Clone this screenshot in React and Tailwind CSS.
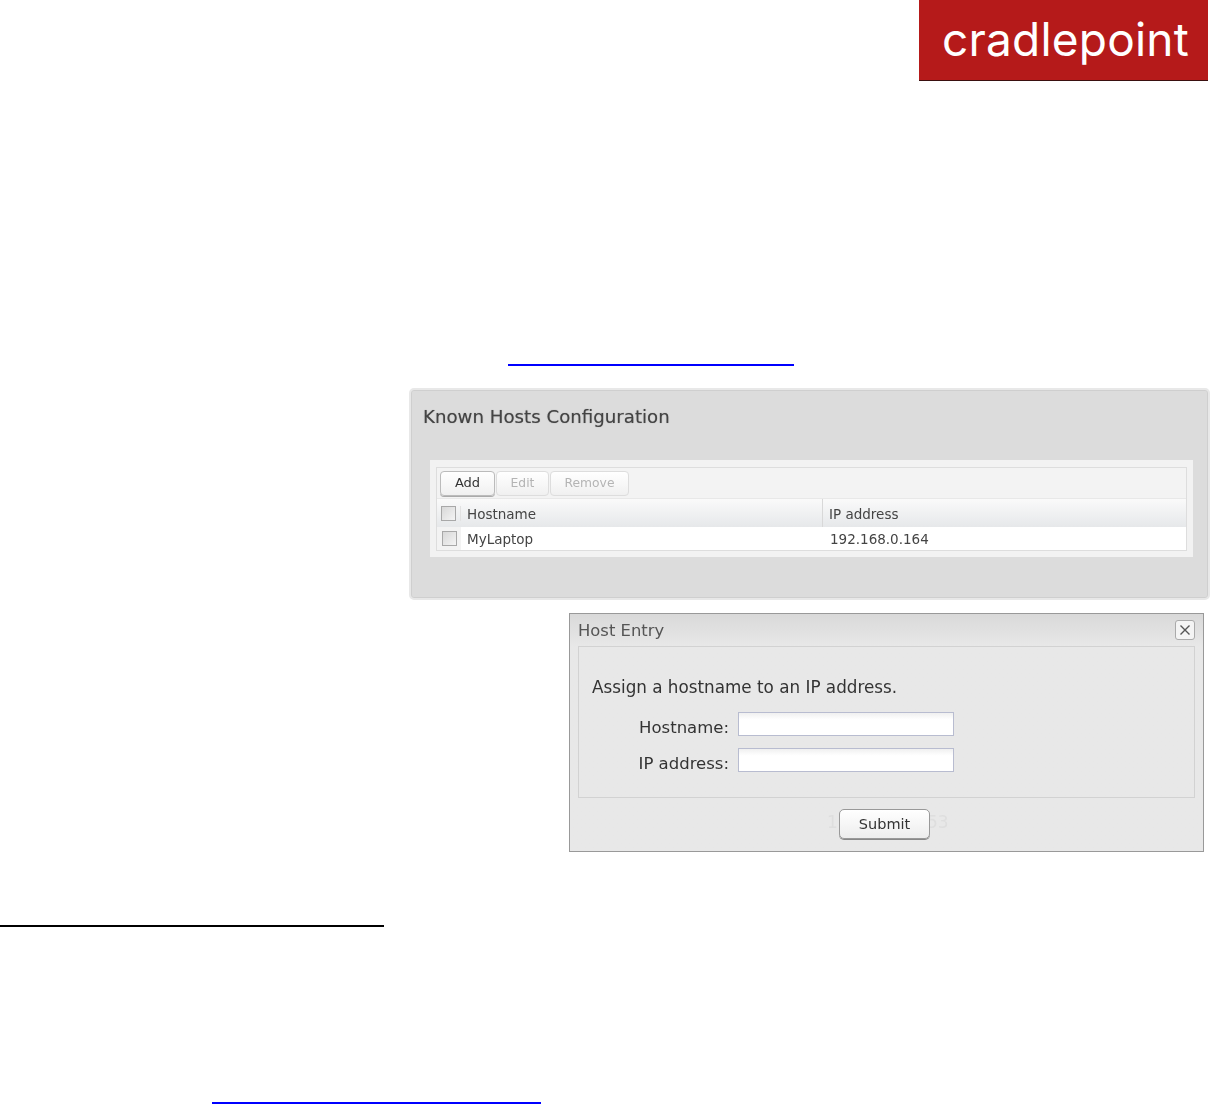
function ToolButton({ label, disabled, className }) {
  return (
    <div
      className={`flex h-[25px] items-center justify-center rounded-[4px] border bg-gradient-to-b from-white to-[#f0f0f0] ${
        disabled ? "border-[#dddddd] text-[12.3px] text-[#b4b4b4]" : "border-[#bbbbbb] text-[13px] text-[#333333] shadow-[0_1px_0_#aaaaaa]"
      } ${className}`}
    >
      {label}
    </div>
  );
}

function CheckBox() {
  return <div className="h-[15px] w-[15px] border border-[#a8a8a8] bg-gradient-to-br from-[#d8d8d8] to-[#f4f4f4]" />;
}

function KnownHosts() {
  return (
    <div className="ml-[409px] mt-[22px] h-[212px] w-[801px] rounded-[5px] border-[3px] border-[#e8e8e8] bg-[#dcdcdc] outline outline-1 -outline-offset-3 outline-[#cfcfcf]">
      <h2 className="ml-[11px] mt-[14px] text-[18.2px] leading-[24px] text-[#444444] [text-shadow:0_0_1px_#888888]">
        Known Hosts Configuration
      </h2>
      <div className="ml-[18px] mt-[31px] h-[97px] w-[763px] bg-[#f2f2f2] px-[6px] pt-[7px]">
        <div className="border border-[#dddddd] bg-white">
          <div className="flex h-[31px] items-center border-b border-[#e8e8e8] bg-[#f3f3f3] pl-[3px]">
            <ToolButton label="Add" className="w-[55px]" />
            <ToolButton label="Edit" disabled className="ml-[1px] w-[53px]" />
            <ToolButton label="Remove" disabled className="ml-[1px] w-[79px]" />
          </div>
          <div className="flex h-[28px] items-center bg-gradient-to-b from-[#fafafa] to-[#e6e8ea] text-[13.5px] text-[#444444]">
            <div className="flex w-[24px] shrink-0 justify-center border-r border-[#e2e2e2]">
              <CheckBox />
            </div>
            <div className="w-[362px] border-r border-[#d8d8d8] pl-[6px] pt-[3px] leading-[25px]">Hostname</div>
            <div className="pl-[6px] pt-[3px]">IP address</div>
          </div>
          <div className="flex h-[23px] items-center text-[13.5px] text-[#444444]">
            <div className="flex w-[24px] shrink-0 items-center justify-center self-stretch bg-[#f3f3f3]">
              <CheckBox />
            </div>
            <div className="w-[362px] pl-[6px] pt-[1px]">MyLaptop</div>
            <div className="pl-[7px] pt-[1px]">192.168.0.164</div>
          </div>
        </div>
      </div>
    </div>
  );
}

function FormRow({ label }) {
  return (
    <div className="flex h-[24px] items-center">
      <label className="w-[137px] pt-[8px] text-right text-[16.5px]">{label}</label>
      <div className="ml-[9px] h-[24px] w-[216px] border border-[#b8bcd0] bg-gradient-to-b from-[#f0f0f0] to-white to-30%" />
    </div>
  );
}

function HostEntry() {
  return (
    <div className="ml-[569px] mt-[13px] h-[239px] w-[635px] border border-[#999999] bg-gradient-to-b from-[#d9d9d9] to-[#e8e8e8] to-[14%] px-[8px] text-[#333333]">
      <div className="flex h-[32px] items-center justify-between">
        <span className="pt-[3px] text-[16.4px] text-[#555555]">Host Entry</span>
        <div className="flex h-[20px] w-[20px] items-center justify-center rounded-[3px] border border-[#aaaaaa] bg-[#f4f4f4]">
          <svg width="12" height="12" viewBox="0 0 12 12" fill="none" stroke="#555555" strokeWidth="1.4">
            <path d="M1.5 1.5 10.5 10.5M10.5 1.5 1.5 10.5" />
          </svg>
        </div>
      </div>
      <div className="h-[152px] border border-[#d2d2d2] pl-[13px] pt-[28px] text-[16.8px]">
        <p className="leading-[24px]">Assign a hostname to an IP address.</p>
        <div className="mt-[13px] flex flex-col gap-[12px]">
          <FormRow label="Hostname:" />
          <FormRow label="IP address:" />
        </div>
      </div>
      <div className="relative mt-[11px] flex justify-center">
        {/* ghost text showing through the dialog */}
        <span className="absolute left-[249px] top-[1px] text-[17px] text-[#dedede]">1</span>
        <span className="absolute left-[349px] top-[1px] text-[17px] text-[#dedede]">53</span>
        <div className="relative flex h-[30px] w-[91px] -translate-x-[2px] items-center justify-center rounded-[5px] border border-[#999999] bg-gradient-to-b from-white to-[#ededed] pt-[1px] text-[14.5px] shadow-[0_1px_0_#888888]">
          Submit
        </div>
      </div>
    </div>
  );
}

export default function App() {
  return (
    <div className="h-[1104px] w-[1210px] overflow-hidden bg-white font-['DejaVu_Sans',sans-serif]">
      {/* logo */}
      <div className="ml-[919px] flex h-[81px] w-[289px] items-center justify-center border-b border-[#3a1010] bg-[#b51a1a] pb-[3px] pl-[4px] font-['Inter',sans-serif] text-[46px] font-normal leading-none tracking-[0.2px] text-white">
        cradlepoint
      </div>

      <div className="ml-[508px] mt-[283px] h-[2px] w-[286px] bg-[#0000ff]" />

      <div className="blur-[0.5px]">
        <KnownHosts />
        <HostEntry />
      </div>

      <div className="mt-[73px] h-[2px] w-[384px] bg-black" />
      <div className="ml-[212px] mt-[175px] h-[2px] w-[329px] bg-[#0000ff]" />
    </div>
  );
}
